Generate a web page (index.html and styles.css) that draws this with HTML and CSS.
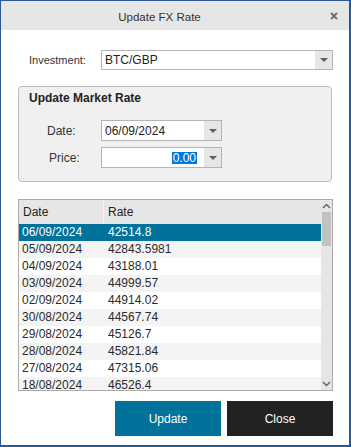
FILE: index.html
```html
<!DOCTYPE html>
<html lang="en">
<head>
    <meta charset="UTF-8">
    <title>Update FX Rate</title>
    <link rel="stylesheet" href="styles.css">
</head>
<body>
<div class="window">
    <div class="titlebar">
        <div class="title">Update FX Rate</div>
        <div class="close">
            <svg width="8" height="8" viewBox="0 0 8 8"><path d="M1 1L7 7M7 1L1 7" stroke="#707070" stroke-width="2"/></svg>
        </div>
    </div>

    <div class="content">
        <div class="field-row">
            <label class="field-label">Investment:</label>
            <div class="combo combo-wide">
                <span class="combo-text">BTC/GBP</span>
                <span class="combo-arrow"></span>
            </div>
        </div>

        <div class="group">
            <div class="group-title">Update Market Rate</div>
            <div class="group-row">
                <label class="group-label">Date:</label>
                <div class="combo combo-small">
                    <span class="combo-text">06/09/2024</span>
                    <span class="combo-arrow"></span>
                </div>
            </div>
            <div class="group-row">
                <label class="group-label price-label">Price:</label>
                <div class="combo combo-small">
                    <span class="combo-text align-right"><span class="selected-text">0.00</span></span>
                    <span class="combo-arrow"></span>
                </div>
            </div>
        </div>

        <div class="grid">
            <div class="grid-body">
                <div class="grid-header">
                    <div class="col-date">Date</div>
                    <div class="col-rate">Rate</div>
                </div>
                <div class="grid-row selected"><div class="col-date">06/09/2024</div><div class="col-rate">42514.8</div></div>
                <div class="grid-row alt"><div class="col-date">05/09/2024</div><div class="col-rate">42843.5981</div></div>
                <div class="grid-row"><div class="col-date">04/09/2024</div><div class="col-rate">43188.01</div></div>
                <div class="grid-row alt"><div class="col-date">03/09/2024</div><div class="col-rate">44999.57</div></div>
                <div class="grid-row"><div class="col-date">02/09/2024</div><div class="col-rate">44914.02</div></div>
                <div class="grid-row alt"><div class="col-date">30/08/2024</div><div class="col-rate">44567.74</div></div>
                <div class="grid-row"><div class="col-date">29/08/2024</div><div class="col-rate">45126.7</div></div>
                <div class="grid-row alt"><div class="col-date">28/08/2024</div><div class="col-rate">45821.84</div></div>
                <div class="grid-row"><div class="col-date">27/08/2024</div><div class="col-rate">47315.06</div></div>
                <div class="grid-row alt"><div class="col-date">18/08/2024</div><div class="col-rate">46526.4</div></div>
            </div>
            <div class="scrollbar">
                <svg class="scroll-arrow" width="9" height="6" viewBox="0 0 9 6"><path d="M1 5L4.5 1.5L8 5" stroke="#606060" stroke-width="1.4" fill="none"/></svg>
                <div class="scroll-thumb"></div>
                <div class="scroll-space"></div>
                <svg class="scroll-arrow" width="9" height="6" viewBox="0 0 9 6"><path d="M1 1L4.5 4.5L8 1" stroke="#606060" stroke-width="1.4" fill="none"/></svg>
            </div>
        </div>

        <div class="buttons">
            <button class="btn btn-update">Update</button>
            <button class="btn btn-close">Close</button>
        </div>
    </div>
</div>
</body>
</html>
```

FILE: styles.css
```css
body {
    margin: 0;
    font-family: "Liberation Sans", Arial, sans-serif;
    font-size: 11px;
    color: #1e1e1e;
    background: #fff;
}

.window {
    width: 351px;
    height: 447px;
    box-sizing: border-box;
    border: 1px solid #2b5797;
    border-right-width: 2px;
    border-bottom-width: 2px;
    background: #fff;
    overflow: hidden;
}

.titlebar {
    height: 29px;
    background: #e6e6e6;
    display: flex;
    align-items: center;
}

.title {
    flex: 1;
    text-align: center;
    font-size: 11.5px;
    color: #333;
    padding-top: 2px;
}

.close {
    width: 30px;
    display: flex;
    justify-content: center;
    padding-top: 1px;
    padding-left: 1px;
}

.content {
    padding: 20px 0 0 17px;
}

.field-row {
    display: flex;
    align-items: center;
    height: 20px;
}

.field-label {
    width: 72px;
    padding-left: 11px;
    color: #333;
}

.combo {
    box-sizing: border-box;
    display: flex;
    border: 1px solid #b4b4b4;
    background: #fff;
}

.combo-wide {
    width: 232px;
    height: 20px;
}

.combo-small {
    width: 121px;
    height: 21px;
}

.combo-text {
    flex: 1;
    display: flex;
    align-items: center;
    padding-left: 3px;
    font-size: 12px;
    color: #222;
}

.align-right {
    justify-content: flex-end;
    padding-right: 7px;
}

.selected-text {
    background: #0078d7;
    color: #fff;
    line-height: 12px;
    padding: 0 1px;
}

.combo-arrow {
    width: 17px;
    background: #e6e6e6;
    position: relative;
}

.combo-arrow::after {
    content: "";
    position: absolute;
    left: 5px;
    top: 50%;
    margin-top: -2px;
    border-left: 4px solid transparent;
    border-right: 4px solid transparent;
    border-top: 4px solid #606060;
}

.group {
    margin-top: 16px;
    width: 314px;
    height: 96px;
    box-sizing: border-box;
    border: 1px solid #bcbcbc;
    border-radius: 4px;
    background: #f0f0f0;
    padding: 3px 0 0 10px;
}

.group-title {
    font-weight: bold;
    font-size: 12px;
    line-height: 16px;
    color: #222;
}

.group-row {
    display: flex;
    align-items: center;
    margin-top: 6px;
}

.group-title + .group-row {
    margin-top: 14px;
}

.group-label {
    width: 54px;
    padding-left: 18px;
    font-size: 12px;
    color: #333;
}

.price-label {
    width: 52px;
    padding-left: 20px;
}

.grid {
    margin-top: 17px;
    width: 315px;
    height: 192px;
    box-sizing: border-box;
    border: 1px solid #ababab;
    display: flex;
    overflow: hidden;
}

.grid-body {
    flex: 1;
    overflow: hidden;
}

.grid-header {
    display: flex;
    height: 24px;
    align-items: center;
    background: #e6e6e6;
    font-size: 12px;
    color: #222;
}

.grid-header .col-date {
    width: 80px;
    height: 24px;
    line-height: 24px;
    padding-left: 4px;
    border-right: 1px solid #f4f4f4;
}

.grid-header .col-rate {
    padding-left: 4px;
}

.grid-row {
    display: flex;
    height: 17px;
    line-height: 17px;
    font-size: 12px;
    color: #2a2a2a;
}

.grid-row .col-date {
    width: 82px;
    padding-left: 3px;
}

.grid-row .col-rate {
    padding-left: 4px;
}

.grid-row.alt {
    background: #f4f4f4;
}

.grid-row.selected {
    background: #00729c;
    color: #fff;
}

.scrollbar {
    width: 11px;
    background: #e6e6e6;
    display: flex;
    flex-direction: column;
    align-items: center;
}

.scroll-arrow {
    margin: 3px 0;
}

.scroll-thumb {
    width: 9px;
    height: 34px;
    background: #c2c2c2;
}

.scroll-space {
    flex: 1;
}

.buttons {
    margin-top: 10px;
    width: 315px;
    display: flex;
    justify-content: flex-end;
    gap: 6px;
}

.btn {
    width: 106px;
    height: 35px;
    border: none;
    font-family: "Liberation Sans", Arial, sans-serif;
    font-size: 12px;
    color: #fff;
    padding: 0;
}

.btn-update {
    background: #00729c;
}

.btn-close {
    background: #222;
}
```
